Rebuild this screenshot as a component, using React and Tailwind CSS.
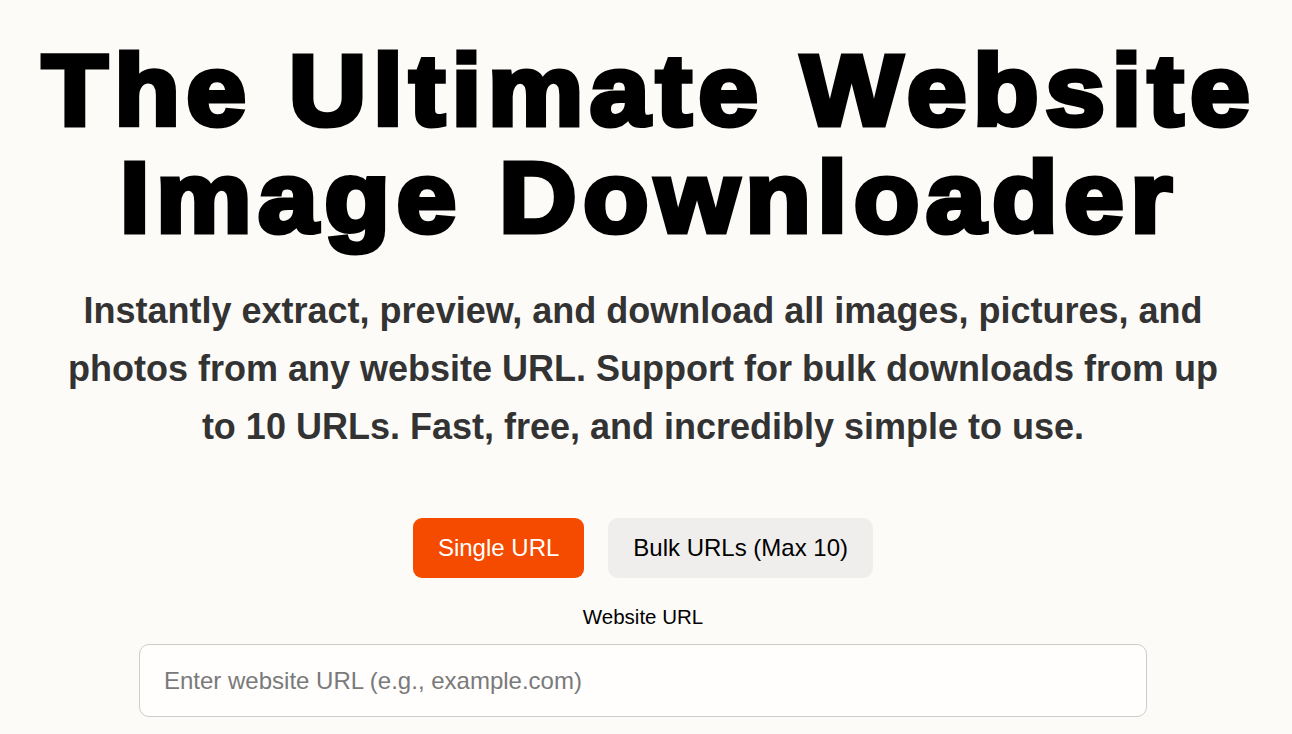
export default function App() {
  return (
    <div className="min-h-screen w-full bg-[#fdfbf8] flex flex-col items-center pt-[37px] pr-[6px]" style={{ fontFamily: '"Liberation Sans", Arial, sans-serif' }}>
      <h1 className="pl-[11px] text-center text-[100px] leading-[107px] font-bold text-black tracking-[6px] scale-x-[1.075] [-webkit-text-stroke-width:5px] [-webkit-text-stroke-color:#000] whitespace-nowrap">
        The Ultimate Website
        <br />
        Image Downloader
      </h1>
      <p className="mt-[31px] max-w-[1170px] text-center text-[36px] leading-[58px] font-bold text-[#333333]">
        Instantly extract, preview, and download all images, pictures, and photos from any website URL. Support for bulk downloads from up to 10 URLs. Fast, free, and incredibly simple to use.
      </p>
      <div className="mt-[62px] flex gap-[24px]">
        <button className="h-[60px] px-[25px] rounded-[9px] bg-[#f54b00] text-white text-[24px]">Single URL</button>
        <button className="h-[60px] px-[25px] rounded-[10px] bg-[#efeeed] text-black text-[24px]">Bulk URLs (Max 10)</button>
      </div>
      <label className="mt-[25px] text-[20.5px] leading-[28px] text-black">Website URL</label>
      <input
        type="text"
        placeholder="Enter website URL (e.g., example.com)"
        className="mt-[13px] w-[1008px] h-[73px] rounded-[10px] border border-[#cccccc] bg-[#fffefd] px-[24px] text-[24px] text-black placeholder:text-[#7a7a7a] outline-none"
      />
      <div className="h-[40px]" />
    </div>
  );
}
